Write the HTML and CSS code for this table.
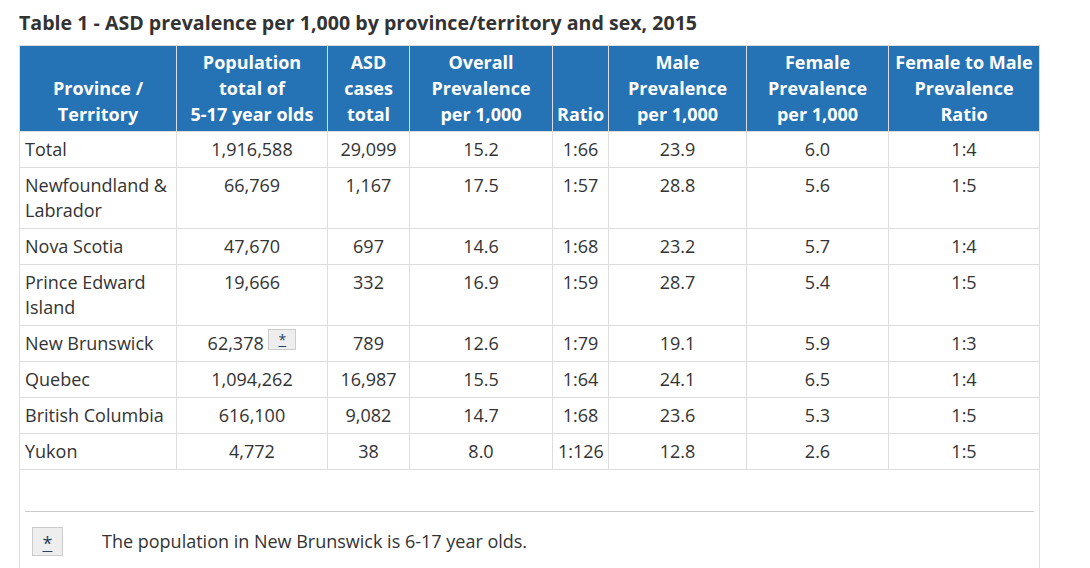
FILE: index.html
```html
<!DOCTYPE html>
<html lang="en">
<head>
<meta charset="utf-8">
<title>Table 1 - ASD prevalence</title>
<link rel="stylesheet" href="styles.css">
</head>
<body>
<div class="page">
  <h2 class="title">Table 1 - ASD prevalence per 1,000 by province/territory and sex, 2015</h2>
  <div class="wrap">
    <table class="data">
      <colgroup>
        <col class="c1"><col class="c2"><col class="c3"><col class="c4"><col class="c5"><col class="c6"><col class="c7"><col class="c8">
      </colgroup>
      <thead>
        <tr>
          <th>Province /<br>Territory</th>
          <th>Population<br>total of<br>5-17 year olds</th>
          <th>ASD<br>cases<br>total</th>
          <th>Overall<br>Prevalence<br>per 1,000</th>
          <th>Ratio</th>
          <th>Male<br>Prevalence<br>per 1,000</th>
          <th>Female<br>Prevalence<br>per 1,000</th>
          <th>Female to Male<br>Prevalence<br>Ratio</th>
        </tr>
      </thead>
      <tbody>
        <tr><td>Total</td><td>1,916,588</td><td>29,099</td><td>15.2</td><td>1:66</td><td>23.9</td><td>6.0</td><td>1:4</td></tr>
        <tr><td>Newfoundland &amp; Labrador</td><td>66,769</td><td>1,167</td><td>17.5</td><td>1:57</td><td>28.8</td><td>5.6</td><td>1:5</td></tr>
        <tr><td>Nova Scotia</td><td>47,670</td><td>697</td><td>14.6</td><td>1:68</td><td>23.2</td><td>5.7</td><td>1:4</td></tr>
        <tr><td>Prince Edward Island</td><td>19,666</td><td>332</td><td>16.9</td><td>1:59</td><td>28.7</td><td>5.4</td><td>1:5</td></tr>
        <tr><td>New Brunswick</td><td>62,378 <sup class="fnref"><a href="#fn1">*</a></sup></td><td>789</td><td>12.6</td><td>1:79</td><td>19.1</td><td>5.9</td><td>1:3</td></tr>
        <tr><td>Quebec</td><td>1,094,262</td><td>16,987</td><td>15.5</td><td>1:64</td><td>24.1</td><td>6.5</td><td>1:4</td></tr>
        <tr><td>British Columbia</td><td>616,100</td><td>9,082</td><td>14.7</td><td>1:68</td><td>23.6</td><td>5.3</td><td>1:5</td></tr>
        <tr><td>Yukon</td><td>4,772</td><td>38</td><td>8.0</td><td>1:126</td><td>12.8</td><td>2.6</td><td>1:5</td></tr>
      </tbody>
    </table>
    <div class="fnotes">
      <div class="rule"></div>
      <div class="fn" id="fn1">
        <span class="fnbtn"><a href="#">*</a></span>
        <p class="fntext">The population in New Brunswick is 6-17 year olds.</p>
      </div>
    </div>
  </div>
</div>
</body>
</html>
```

FILE: styles.css
```css
html, body {
  margin: 0;
  padding: 0;
  background: #fff;
}
body {
  font-family: "Open Sans", "Noto Sans", sans-serif;
  color: #333;
  font-size: 18px;
  line-height: 25px;
}
.page {
  padding: 10px 0 0 19px;
  width: 1021px;
}
.title {
  font-size: 19.6px;
  line-height: 26px;
  font-weight: 700;
  margin: 0 0 8.7px 0;
  color: #333;
}
.wrap {
  width: 1021px;
}
.data {
  border-collapse: collapse;
  table-layout: fixed;
  width: 1020px;
}
.c1 { width: 157px; }
.c2 { width: 151px; }
.c3 { width: 82px; }
.c4 { width: 143px; }
.c5 { width: 56px; }
.c6 { width: 138px; }
.c7 { width: 142px; }
.c8 { width: 151px; }
.data th, .data td {
  border: 1px solid #ddd;
  padding: 5px 5px;
}
.data th {
  background: #2572b4;
  color: #fff;
  font-weight: 700;
  text-align: center;
  vertical-align: bottom;
  line-height: 26px;
  padding: 3.5px 4px;
}
.data td {
  text-align: center;
  vertical-align: top;
}
.data td:first-child {
  text-align: left;
}
.fnref {
  font-size: 14px;
  line-height: 0;
  vertical-align: baseline;
}
.fnref a {
  display: inline-block;
  width: 26px;
  height: 19px;
  line-height: 20px;
  background: #eee;
  border: 1px solid #ccc;
  color: #284162;
  text-decoration: underline;
  text-align: center;
  vertical-align: 5px;
  margin-top: -6px;
}
.fnotes {
  border-left: 1px solid #ddd;
  border-right: 1px solid #ddd;
  padding: 41px 5px 20px 5px;
}
.rule {
  border-top: 1px solid #ccc;
}
.fn {
  display: flex;
  align-items: center;
  padding: 15px 0 0 7px;
}
.fnbtn a {
  display: block;
  width: 29px;
  height: 27px;
  line-height: 30px;
  background: #eee;
  border: 1px solid #ccc;
  color: #284162;
  text-align: center;
  font-size: 18px;
}
.fntext {
  margin: 0 0 0 39px;
}
```
